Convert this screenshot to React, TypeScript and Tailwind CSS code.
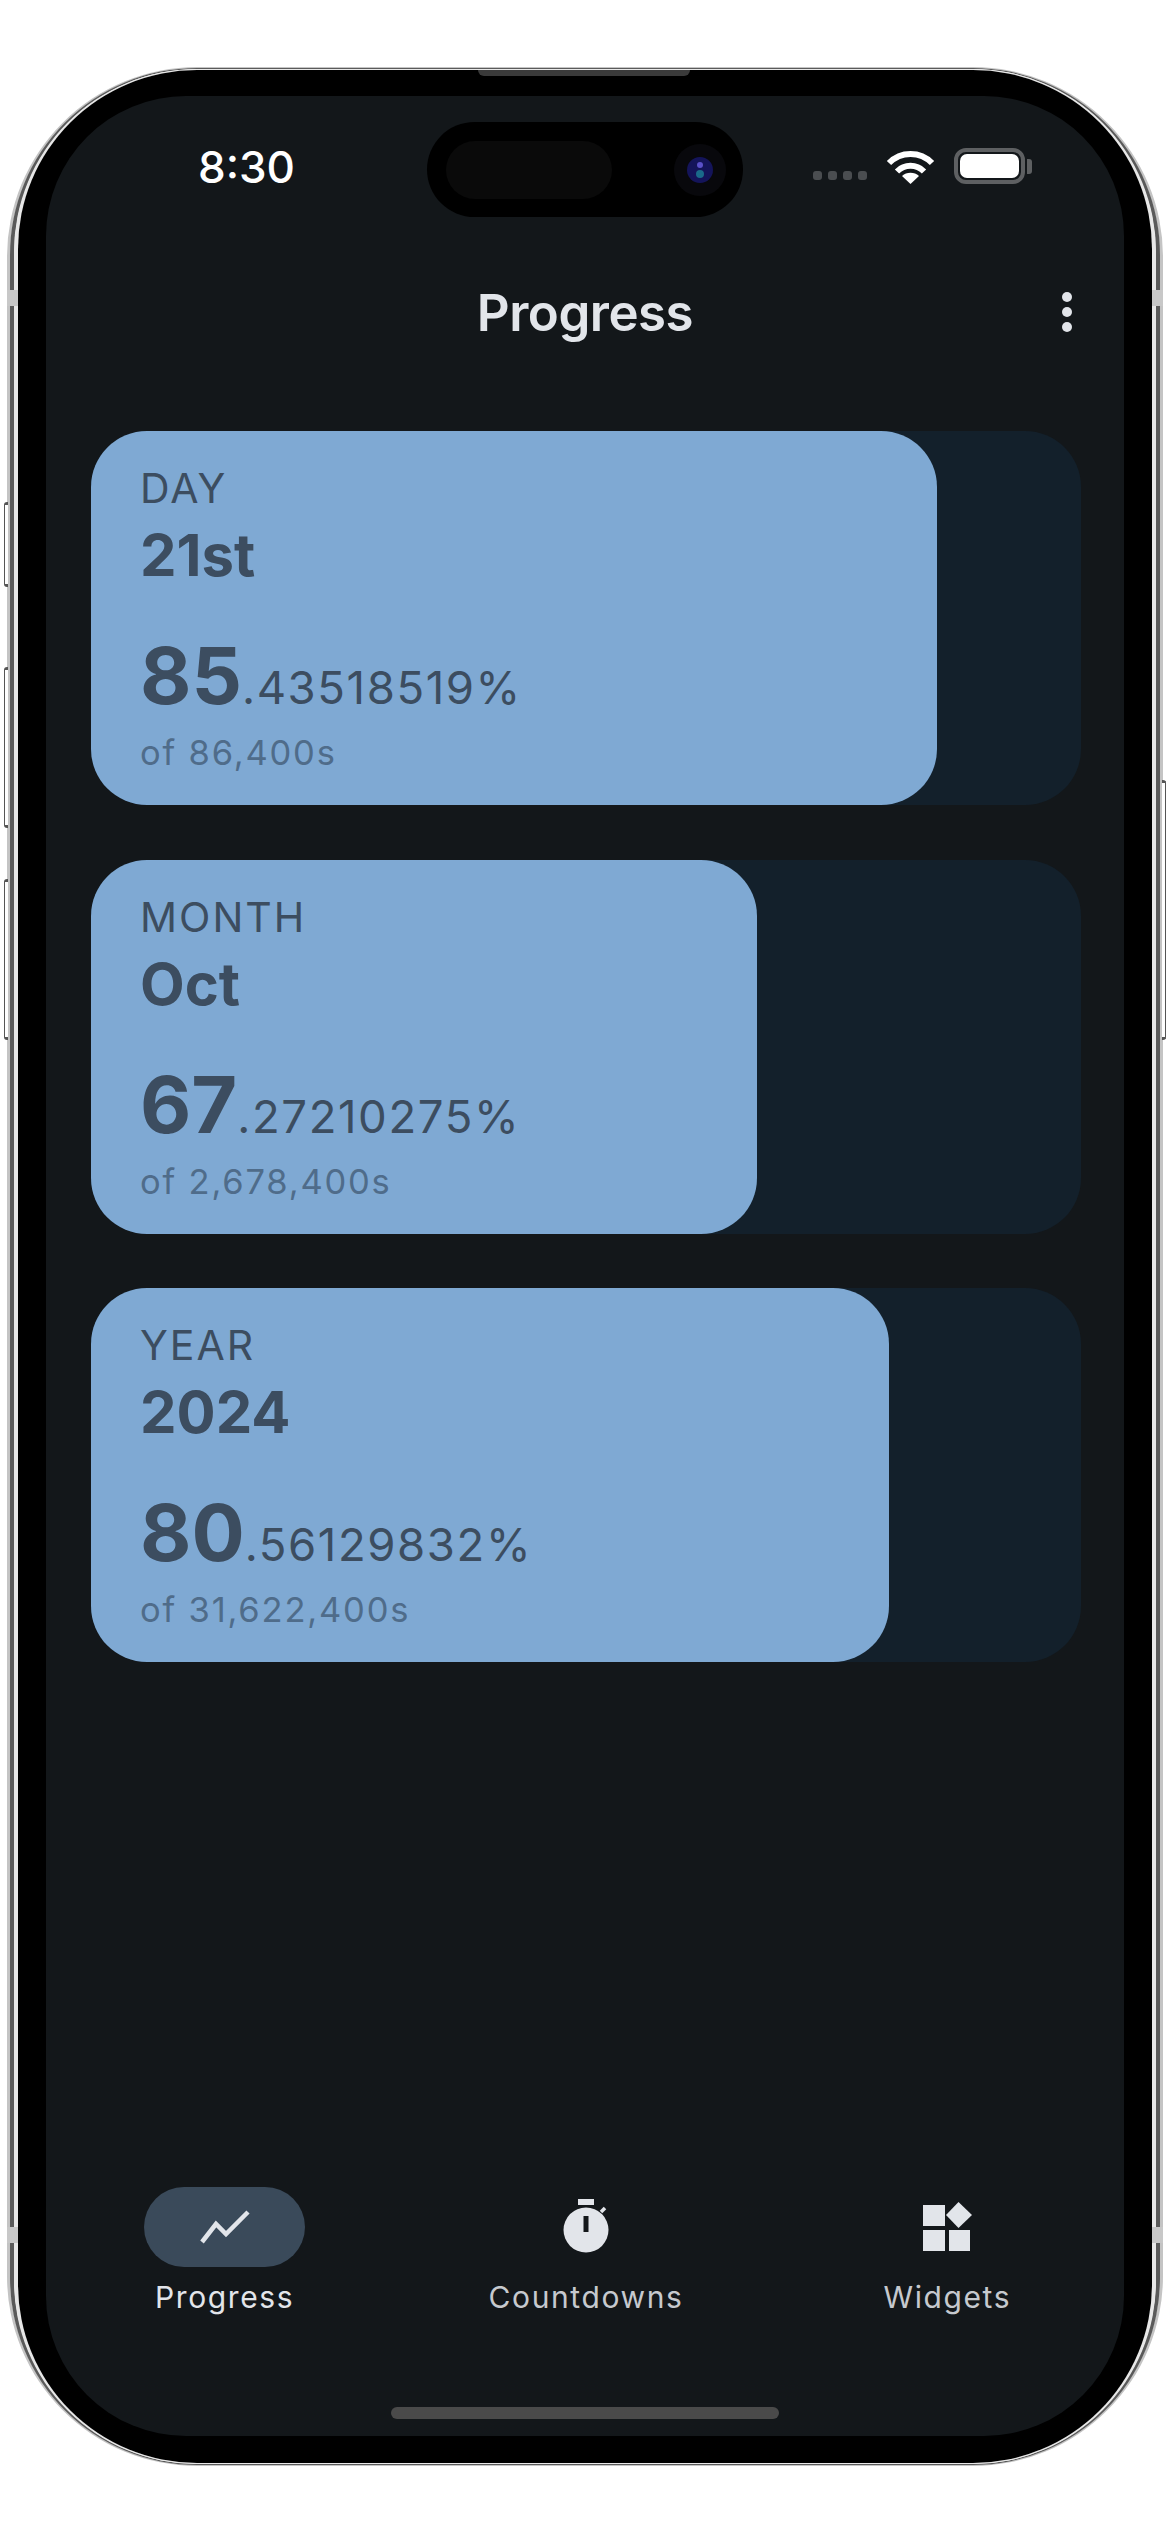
const cards = [
  { label: "DAY", title: "21st", whole: "85", fraction: ".43518519%", percent: 85.43518519, total: "of 86,400s" },
  { label: "MONTH", title: "Oct", whole: "67", fraction: ".27210275%", percent: 67.27210275, total: "of 2,678,400s" },
  { label: "YEAR", title: "2024", whole: "80", fraction: ".56129832%", percent: 80.56129832, total: "of 31,622,400s" },
];

function ProgressCard({ card }: { card: (typeof cards)[number] }) {
  return (
    <div className="h-[374px] rounded-[56px] bg-[#13202b]">
      <div
        className="flex h-full flex-col rounded-[56px] bg-[#7fa9d3] pl-[49px] pt-[33px] text-[#3c4d60]"
        style={{ width: `${card.percent}%` }}
      >
        <div className="text-[41px] leading-[48px] tracking-[2px]">{card.label}</div>
        <div className="mt-[10px] text-[58px] font-bold leading-[66px]">{card.title}</div>
        <div className="mt-[42px] flex items-baseline leading-[90px]">
          <span className="text-[79px] font-bold">{card.whole}</span>
          <span className="text-[45.5px] tracking-[1.6px]">{card.fraction}</span>
        </div>
        <div className="mt-[-2px] text-[34.5px] leading-[44px] tracking-[1.8px] text-[#4f6c8a]">{card.total}</div>
      </div>
    </div>
  );
}

function StatusBar() {
  return (
    <div className="mt-[50px] flex h-[40px] items-center pl-[152px] pr-[92px]">
      <span className="mt-[2px] text-[44px] font-medium leading-[40px] text-white">8:30</span>
      <div className="ml-auto mt-[18px] flex gap-[6px]">
        <span className="h-[9px] w-[9px] rounded-[3px] bg-[#4a4d50]" />
        <span className="h-[9px] w-[9px] rounded-[3px] bg-[#4a4d50]" />
        <span className="h-[9px] w-[9px] rounded-[3px] bg-[#4a4d50]" />
        <span className="h-[9px] w-[9px] rounded-[3px] bg-[#4a4d50]" />
      </div>
      <svg className="ml-[19px]" width="49" height="35" viewBox="0 0 49 35" fill="none">
        <path d="M3 14A30 30 0 0 1 46 14" stroke="#fff" strokeWidth="6" />
        <path d="M11 22.5A19 19 0 0 1 38 22.5" stroke="#fff" strokeWidth="6" />
        <path d="M24.5 35L16 27A13 13 0 0 1 33 27Z" fill="#fff" />
      </svg>
      <div className="ml-[19px] flex items-center">
        <div className="h-[36px] w-[71px] rounded-[12px] border-[4px] border-[#5e6062] p-[2px]">
          <div className="h-full w-full rounded-[7px] bg-white" />
        </div>
        <div className="ml-[2px] h-[15px] w-[5px] rounded-r-[3px] bg-[#5e6062]" />
      </div>
    </div>
  );
}

function Header() {
  return (
    <div className="relative mt-[95px] flex h-[64px] items-center justify-center">
      <span className="text-[51px] font-semibold leading-[64px] tracking-[-0.5px] text-[#e2e5ea]">Progress</span>
      <div className="absolute right-[52px] top-[11px] flex flex-col gap-[5px]">
        <span className="h-[10px] w-[10px] rounded-full bg-[#e2e5ea]" />
        <span className="h-[10px] w-[10px] rounded-full bg-[#e2e5ea]" />
        <span className="h-[10px] w-[10px] rounded-full bg-[#e2e5ea]" />
      </div>
    </div>
  );
}

function BottomNav() {
  return (
    <div className="ml-[-2px] mr-[-4px] mt-auto grid grid-cols-3 text-center text-[30px] leading-[36px] tracking-[1.6px]">
      <div className="flex flex-col items-center text-[#e2e5ea]">
        <div className="flex h-[80px] w-[161px] items-center justify-center rounded-full bg-[#3a4a5a]">
          <svg width="50" height="34" viewBox="0 0 50 34" fill="none">
            <path d="M2 32L16 14L26 24L48 2" stroke="#e2e5ea" strokeWidth="4.5" />
          </svg>
        </div>
        <span className="mt-[12px]">Progress</span>
      </div>
      <div className="flex flex-col items-center text-[#c6c9ce]">
        <div className="flex h-[80px] items-center justify-center">
          <svg width="50" height="56" viewBox="0 0 50 56" fill="none">
            <rect x="17" y="0" width="16" height="6" fill="#e2e5ea" />
            <path d="M40 13L44 9" stroke="#e2e5ea" strokeWidth="3.5" />
            <circle cx="25" cy="31" r="22.5" fill="#e2e5ea" />
            <rect x="22.5" y="17" width="5" height="16" fill="#13171a" />
          </svg>
        </div>
        <span className="mt-[12px]">Countdowns</span>
      </div>
      <div className="flex flex-col items-center text-[#c6c9ce]">
        <div className="flex h-[80px] items-center justify-center">
          <svg width="50" height="50" viewBox="0 0 50 50" fill="#e2e5ea">
            <rect x="1" y="3" width="22" height="21" />
            <path d="M36.5 0L50 13L36.5 26L24 13Z" />
            <rect x="1" y="28" width="22" height="21" />
            <rect x="27" y="28" width="21" height="21" />
          </svg>
        </div>
        <span className="mt-[12px]">Widgets</span>
      </div>
    </div>
  );
}

function DynamicIsland() {
  return (
    <div className="absolute left-[381px] top-[26px] flex h-[95px] w-[316px] items-center rounded-full bg-black pl-[19px]">
      <div className="h-[58px] w-[166px] rounded-full bg-[#0a0a0a]" />
      <div className="ml-[62px] flex h-[52px] w-[52px] items-center justify-center rounded-full bg-[#08080c]">
        <svg width="26" height="26" viewBox="0 0 26 26">
          <circle cx="13" cy="13" r="13" fill="#14145a" />
          <circle cx="13" cy="8" r="3" fill="#5a50c8" />
          <circle cx="13" cy="17" r="4" fill="#1a6a8a" />
        </svg>
      </div>
    </div>
  );
}

export default function App() {
  return (
    <div className="h-[2532px] w-[1170px] overflow-hidden bg-white pt-[67px] font-['Inter',sans-serif]">
      <div className="relative mx-[7px] h-[2399px] rounded-[190px] border-x-[3px] border-y-[1px] border-[#c4c4c4]">
        <span className="absolute left-[-6px] top-[434px] h-[85px] w-[4px] rounded-l-[3px] border-y-[3px] border-l-[1px] border-[#555] bg-white" />
        <span className="absolute left-[-6px] top-[599px] h-[161px] w-[4px] rounded-l-[3px] border-y-[3px] border-l-[1px] border-[#555] bg-white" />
        <span className="absolute left-[-6px] top-[811px] h-[161px] w-[4px] rounded-l-[3px] border-y-[3px] border-l-[1px] border-[#555] bg-white" />
        <span className="absolute right-[-6px] top-[712px] h-[260px] w-[4px] rounded-r-[3px] border-y-[3px] border-r-[1px] border-[#555] bg-white" />
        <span className="absolute left-[-3px] top-[222px] z-10 h-[16px] w-[11px] bg-[#c8c8c8]" />
        <span className="absolute right-[-3px] top-[222px] z-10 h-[16px] w-[11px] bg-[#c8c8c8]" />
        <span className="absolute bottom-[222px] left-[-3px] z-10 h-[16px] w-[11px] bg-[#c8c8c8]" />
        <span className="absolute bottom-[222px] right-[-3px] z-10 h-[16px] w-[11px] bg-[#c8c8c8]" />
        <div className="h-full rounded-[187px] border-x-[4px] border-y-[1px] border-[#5a5a5a]">
          <div className="h-full rounded-[183px] border-x-[4px] border-y-[1px] border-[#e8e8e8]">
            <div className="relative h-full rounded-[179px] bg-black px-[28px] pb-[27px] pt-[26px]">
              <div className="absolute left-[460px] top-0 h-[6px] w-[212px] rounded-b-[6px] bg-[#3a3a3a]" />
              <div className="relative flex h-full flex-col rounded-[140px] bg-[#13171a] pb-[17px]">
                <DynamicIsland />
                <StatusBar />
                <Header />
                <div className="mt-[86px] flex flex-col gap-[54.5px] pl-[45px] pr-[43px]">
                  {cards.map((card) => (
                    <ProgressCard key={card.label} card={card} />
                  ))}
                </div>
                <BottomNav />
                <div className="mx-auto mt-[92px] h-[12px] w-[388px] rounded-full bg-[#4a4a4a]" />
              </div>
            </div>
          </div>
        </div>
      </div>
    </div>
  );
}
